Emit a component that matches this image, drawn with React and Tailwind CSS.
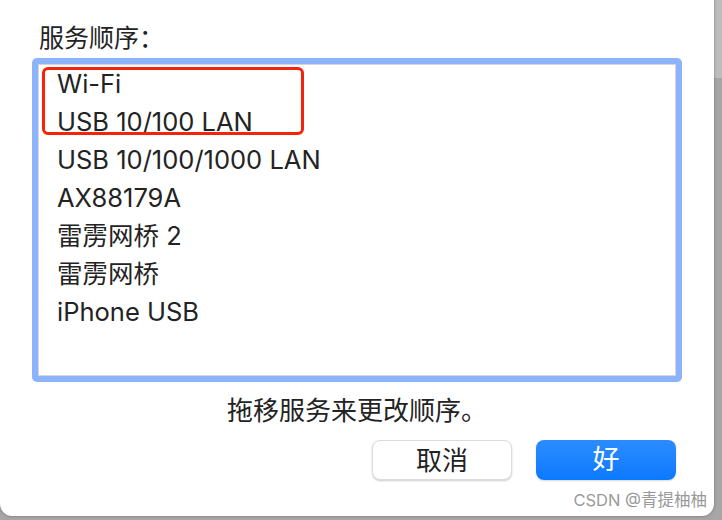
export default function App() {
  const items = [
    "Wi-Fi",
    "USB 10/100 LAN",
    "USB 10/100/1000 LAN",
    "AX88179A",
    "雷雳网桥 2",
    "雷雳网桥",
    "iPhone USB",
  ];
  const font = { fontFamily: 'Inter, "Noto Sans CJK SC", sans-serif' };
  return (
    <div
      className="relative w-[722px] h-[520px] overflow-hidden bg-[#a6a6a6]"
      style={font}
    >
      <div className="absolute right-0 top-0 w-[8px] h-[78px] bg-[#bdbdbd]" />
      <div className="relative w-[714px] h-[516px] bg-white rounded-b-[12px] shadow-[0_0_3px_rgba(0,0,0,0.35)] flex flex-col text-[#232323]">
        <div className="pl-[39px] pt-[22px] text-[25px] leading-[32px]">服务顺序：</div>
        <div className="relative ml-[32px] mt-[4px] w-[650px] h-[324px] rounded-[5px] bg-[#8db4fb] p-[6px]">
          <div className="w-full h-full bg-white border border-[#d6d6d6] pl-[18px] text-[25.5px] leading-[38px]">
            {items.map((t) => (
              <div key={t}>{t}</div>
            ))}
          </div>
          <div className="absolute left-[10px] top-[9px] w-[262px] h-[68px] rounded-[6px] border-[3px] border-[#f5220c]" />
        </div>
        <div className="mt-[13px] text-center text-[26px] leading-[32px]">拖移服务来更改顺序。</div>
        <div className="mt-[13px] flex justify-end gap-[24px] pr-[38px]">
          <div className="w-[140px] h-[40px] rounded-[8px] bg-white border border-[#dcdcdc] shadow-[0_1px_2px_rgba(0,0,0,0.2)] flex items-center justify-center text-[26px] text-[#222]">
            取消
          </div>
          <div className="w-[140px] h-[40px] rounded-[8px] bg-gradient-to-b from-[#2b8cff] to-[#0a79ff] shadow-[0_1px_2px_rgba(0,0,0,0.15)] flex items-center justify-center text-[27px] text-white">
            好
          </div>
        </div>
        <div className="absolute right-[7px] bottom-[5px] text-[16.5px] leading-[22px] text-[#9a9a9a]">
          CSDN @青提柚柚
        </div>
      </div>
    </div>
  );
}
